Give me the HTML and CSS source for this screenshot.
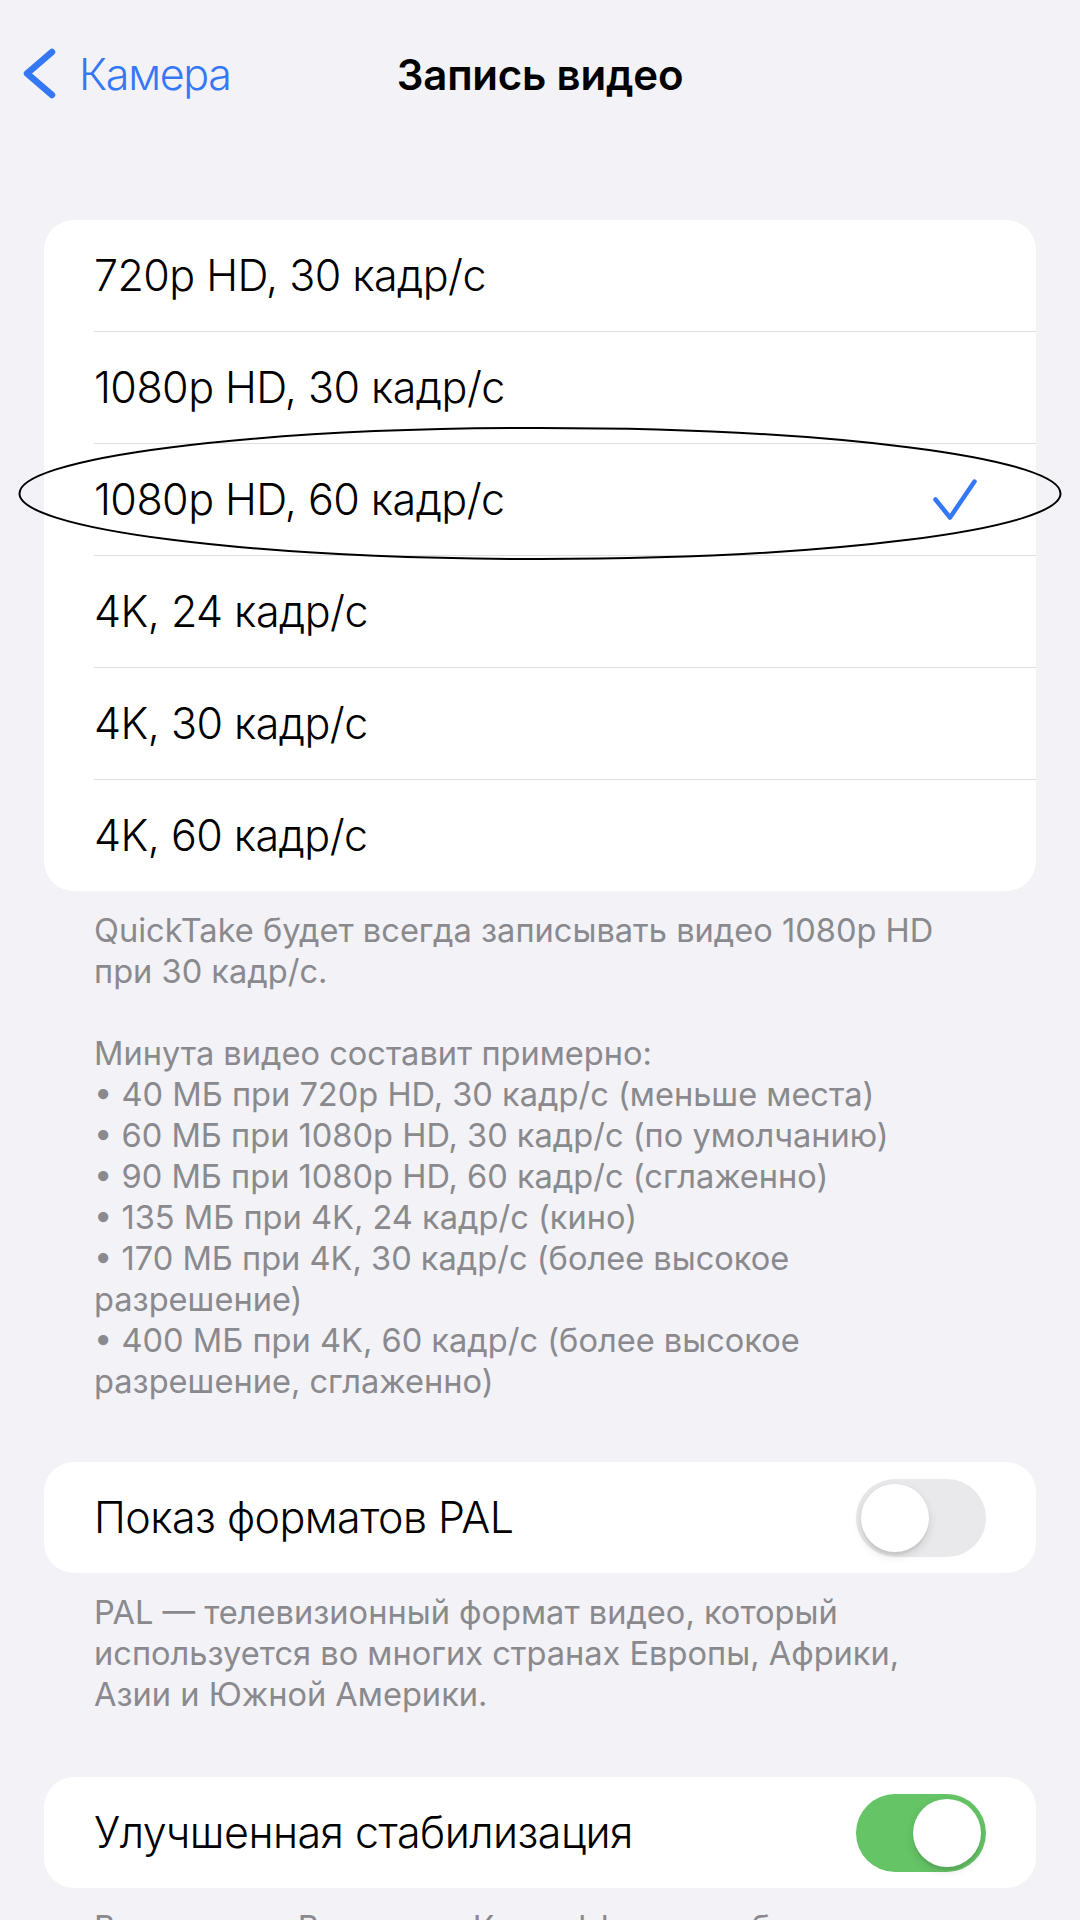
FILE: index.html
```html
<!DOCTYPE html>
<html lang="ru">
<head>
<meta charset="utf-8">
<title>Запись видео</title>
<link rel="stylesheet" href="styles.css">
</head>
<body>
<div class="screen">
  <header class="nav">
    <div class="nav-back">
      <svg class="chevron" width="34" height="52" viewBox="0 0 34 52" aria-hidden="true">
        <polyline points="30,4 5,25.5 30,47" fill="none" stroke="#3478f6" stroke-width="6.5" stroke-linecap="round" stroke-linejoin="round"/>
      </svg>
      <span class="back-label">Камера</span>
    </div>
    <div class="nav-title">Запись видео</div>
    <div class="nav-spacer"></div>
  </header>

  <section class="group group-first">
    <div class="card-wrap">
      <ul class="card">
        <li class="row"><div class="row-inner"><span class="label">720p HD, 30 кадр/с</span></div></li>
        <li class="row"><div class="row-inner"><span class="label">1080p HD, 30 кадр/с</span></div></li>
        <li class="row"><div class="row-inner checked"><span class="label">1080p HD, 60 кадр/с</span>
          <svg class="check" width="46" height="43" viewBox="0 0 46 43" aria-hidden="true">
            <polyline points="3.5,21.5 18,39.5 42.5,3.5" fill="none" stroke="#3478f6" stroke-width="4.5" stroke-linecap="round" stroke-linejoin="round"/>
          </svg></div></li>
        <li class="row"><div class="row-inner"><span class="label">4K, 24 кадр/с</span></div></li>
        <li class="row"><div class="row-inner"><span class="label">4K, 30 кадр/с</span></div></li>
        <li class="row"><div class="row-inner"><span class="label">4K, 60 кадр/с</span></div></li>
      </ul>
      <svg class="annotation" width="1044" height="135" viewBox="0 0 1044 135" aria-hidden="true">
        <ellipse cx="522" cy="67.5" rx="520.5" ry="65.5" fill="none" stroke="#000" stroke-width="2"/>
      </svg>
    </div>
    <p class="footer">QuickTake будет всегда записывать видео 1080p HD<br>при 30 кадр/с.<br><br>Минута видео составит примерно:<br>• 40 МБ при 720p HD, 30 кадр/с (меньше места)<br>• 60 МБ при 1080p HD, 30 кадр/с (по умолчанию)<br>• 90 МБ при 1080p HD, 60 кадр/с (сглаженно)<br>• 135 МБ при 4K, 24 кадр/с (кино)<br>• 170 МБ при 4K, 30 кадр/с (более высокое<br>разрешение)<br>• 400 МБ при 4K, 60 кадр/с (более высокое<br>разрешение, сглаженно)</p>
  </section>

  <section class="group">
    <div class="card">
      <div class="toggle-row">
        <span class="label">Показ форматов PAL</span>
        <span class="switch"><span class="knob"></span></span>
      </div>
    </div>
    <p class="footer">PAL — телевизионный формат видео, который<br>используется во многих странах Европы, Африки,<br>Азии и Южной Америки.</p>
  </section>

  <section class="group group-last">
    <div class="card">
      <div class="toggle-row">
        <span class="label">Улучшенная стабилизация</span>
        <span class="switch on"><span class="knob"></span></span>
      </div>
    </div>
    <p class="footer">В режимах «Видео» и «Киноэффект» изображение немного<br>увеличивается для улучшенной стабилизации.</p>
  </section>
</div>
</body>
</html>
```

FILE: styles.css
```css
* { box-sizing: border-box; }

html, body {
  margin: 0;
  padding: 0;
}

body {
  background: #f2f2f7;
  font-family: Inter, "Noto Sans", "Liberation Sans", sans-serif;
  color: #000;
  width: 1080px;
  height: 1920px;
  overflow: hidden;
}

.screen {
  display: flex;
  flex-direction: column;
}

/* navigation bar */
.nav {
  height: 148px;
  display: grid;
  grid-template-columns: 1fr auto 1fr;
  align-items: center;
}

.nav-back {
  display: flex;
  align-items: center;
  padding-left: 22px;
  gap: 23px;
  color: #3478f6;
  font-size: 43px;
  font-weight: 350;
  letter-spacing: -1.3px;
}

.chevron { display: block; }

.nav-title {
  font-size: 42px;
  font-weight: 600;
  letter-spacing: -0.2px;
}

/* groups */
.group {
  display: flex;
  flex-direction: column;
}

.group-first { margin-top: 72px; }

.group + .group { margin-top: 60px; }

.group + .group-last { margin-top: 62px; }

.card-wrap {
  position: relative;
}

.card {
  margin: 0 44px;
  padding: 0;
  list-style: none;
  background: #fff;
  border-radius: 30px;
  overflow: hidden;
}

.row {
  padding-left: 50px;
}

.row-inner {
  height: 112px;
  display: flex;
  align-items: center;
  justify-content: space-between;
  padding-right: 50px;
  border-bottom: 1px solid #dedee1;
}

.row:last-child .row-inner {
  height: 111px;
  border-bottom: none;
}

.row-inner.checked { padding-right: 58px; }

.check { display: block; }

.label {
  font-size: 43px;
  font-weight: 350;
  letter-spacing: -0.55px;
  line-height: 1;
}

.annotation {
  position: absolute;
  left: 18px;
  top: 206px;
  pointer-events: none;
}

.footer {
  margin: 0;
  padding: 19px 94px 0;
  font-size: 32.6px;
  font-weight: 370;
  line-height: 41px;
  color: #8a8a8e;
  letter-spacing: 0;
  white-space: nowrap;
}

/* toggles */
.toggle-row {
  height: 111px;
  display: flex;
  align-items: center;
  justify-content: space-between;
  padding: 0 50px;
}

.switch {
  width: 130px;
  height: 78px;
  border-radius: 39px;
  background: #e9e9eb;
  padding: 5px;
  display: flex;
  justify-content: flex-start;
}

.switch.on {
  background: #65c466;
  justify-content: flex-end;
}

.knob {
  width: 68px;
  height: 68px;
  border-radius: 50%;
  background: #fff;
  box-shadow: 0 4px 10px rgba(0, 0, 0, 0.13), 0 3px 1px rgba(0, 0, 0, 0.05);
}
```
